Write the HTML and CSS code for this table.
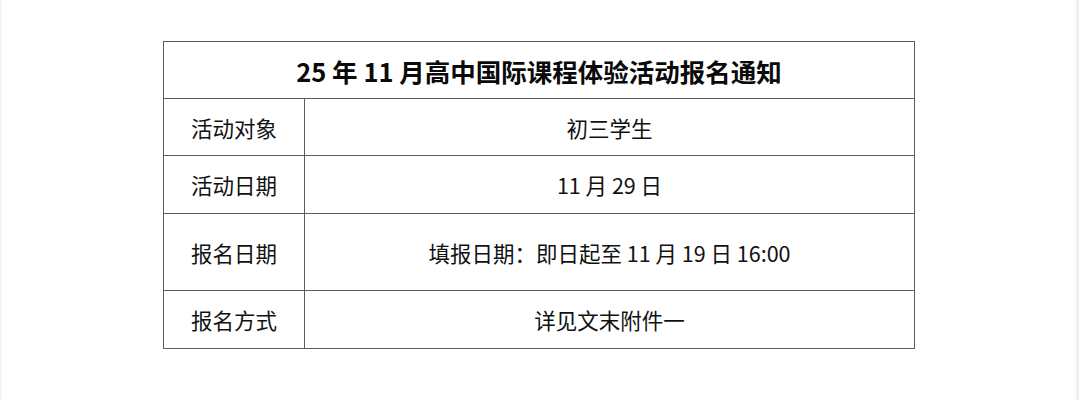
FILE: index.html
```html
<!DOCTYPE html>
<html lang="zh-CN">
<head>
<meta charset="utf-8">
<title>报名通知</title>
<link rel="stylesheet" href="styles.css">
</head>
<body>
<div class="page">
  <table class="notice">
    <colgroup>
      <col class="col-label">
      <col class="col-value">
    </colgroup>
    <tr class="row-title">
      <th colspan="2" class="title">25 年 11 月高中国际课程体验活动报名通知</th>
    </tr>
    <tr class="row-a">
      <td class="label">活动对象</td>
      <td class="value">初三学生</td>
    </tr>
    <tr class="row-b">
      <td class="label">活动日期</td>
      <td class="value">11 月 29 日</td>
    </tr>
    <tr class="row-c">
      <td class="label">报名日期</td>
      <td class="value">填报日期：即日起至 11 月 19 日 16:00</td>
    </tr>
    <tr class="row-d">
      <td class="label">报名方式</td>
      <td class="value">详见文末附件一</td>
    </tr>
  </table>
</div>
</body>
</html>
```
FILE: styles.css
```css
html, body {
  margin: 0;
  padding: 0;
  background: #ffffff;
}
body {
  width: 1079px;
  height: 400px;
  overflow: hidden;
  box-shadow: inset 3px 0 3px -2px rgba(0,0,0,0.08), inset -5px 0 4px -3px rgba(0,0,0,0.1);
  font-family: "Noto Sans CJK SC", "Noto Sans", sans-serif;
  color: #111111;
}
.page {
  padding-top: 41px;
  padding-left: 163px;
}
.notice {
  border-collapse: collapse;
  width: 752px;
  table-layout: fixed;
}
.col-label {
  width: 141px;
}
.notice th, .notice td {
  border: 1px solid #5c5c5c;
  padding: 0;
  text-align: center;
  vertical-align: middle;
}
.title {
  font-size: 25.5px;
  font-weight: 700;
  height: 56px;
  color: #0a0a0a;
}
.label {
  font-size: 21.5px;
}
.value {
  font-size: 21.5px;
}
.row-a td { height: 56px; }
.row-b td { height: 57px; }
.row-c td { height: 76px; }
.row-d td { height: 57px; }
```
